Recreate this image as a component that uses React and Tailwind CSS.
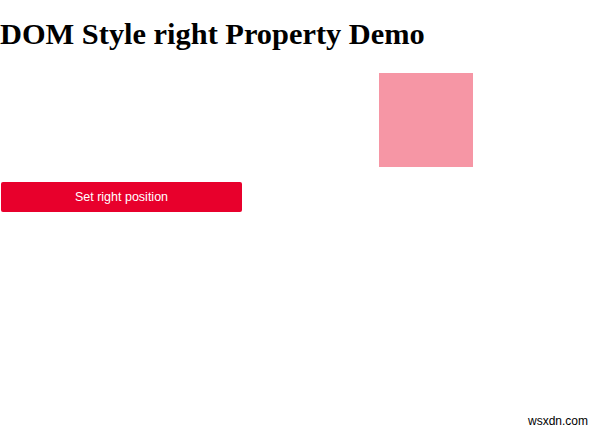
export default function App() {
  return (
    <div className="relative w-[600px] h-[432px] bg-white overflow-hidden">
      <h1 className="m-0 pt-[17px] text-[30.4px] leading-[34px] font-bold text-black font-['Liberation_Serif',serif]">
        DOM Style right Property Demo
      </h1>
      <div className="ml-[379px] mt-[22px] w-[94px] h-[94px] bg-[#f696a5]" />
      <button className="ml-[1px] mt-[15px] w-[241px] h-[30px] pt-[1px] rounded-[2px] bg-[#e8002c] text-white text-[12.5px] font-['Liberation_Sans',sans-serif]">
        Set right position
      </button>
      <span className="absolute right-[12px] bottom-[2px] text-[12px] text-black font-['Liberation_Sans',sans-serif]">
        wsxdn.com
      </span>
    </div>
  )
}
